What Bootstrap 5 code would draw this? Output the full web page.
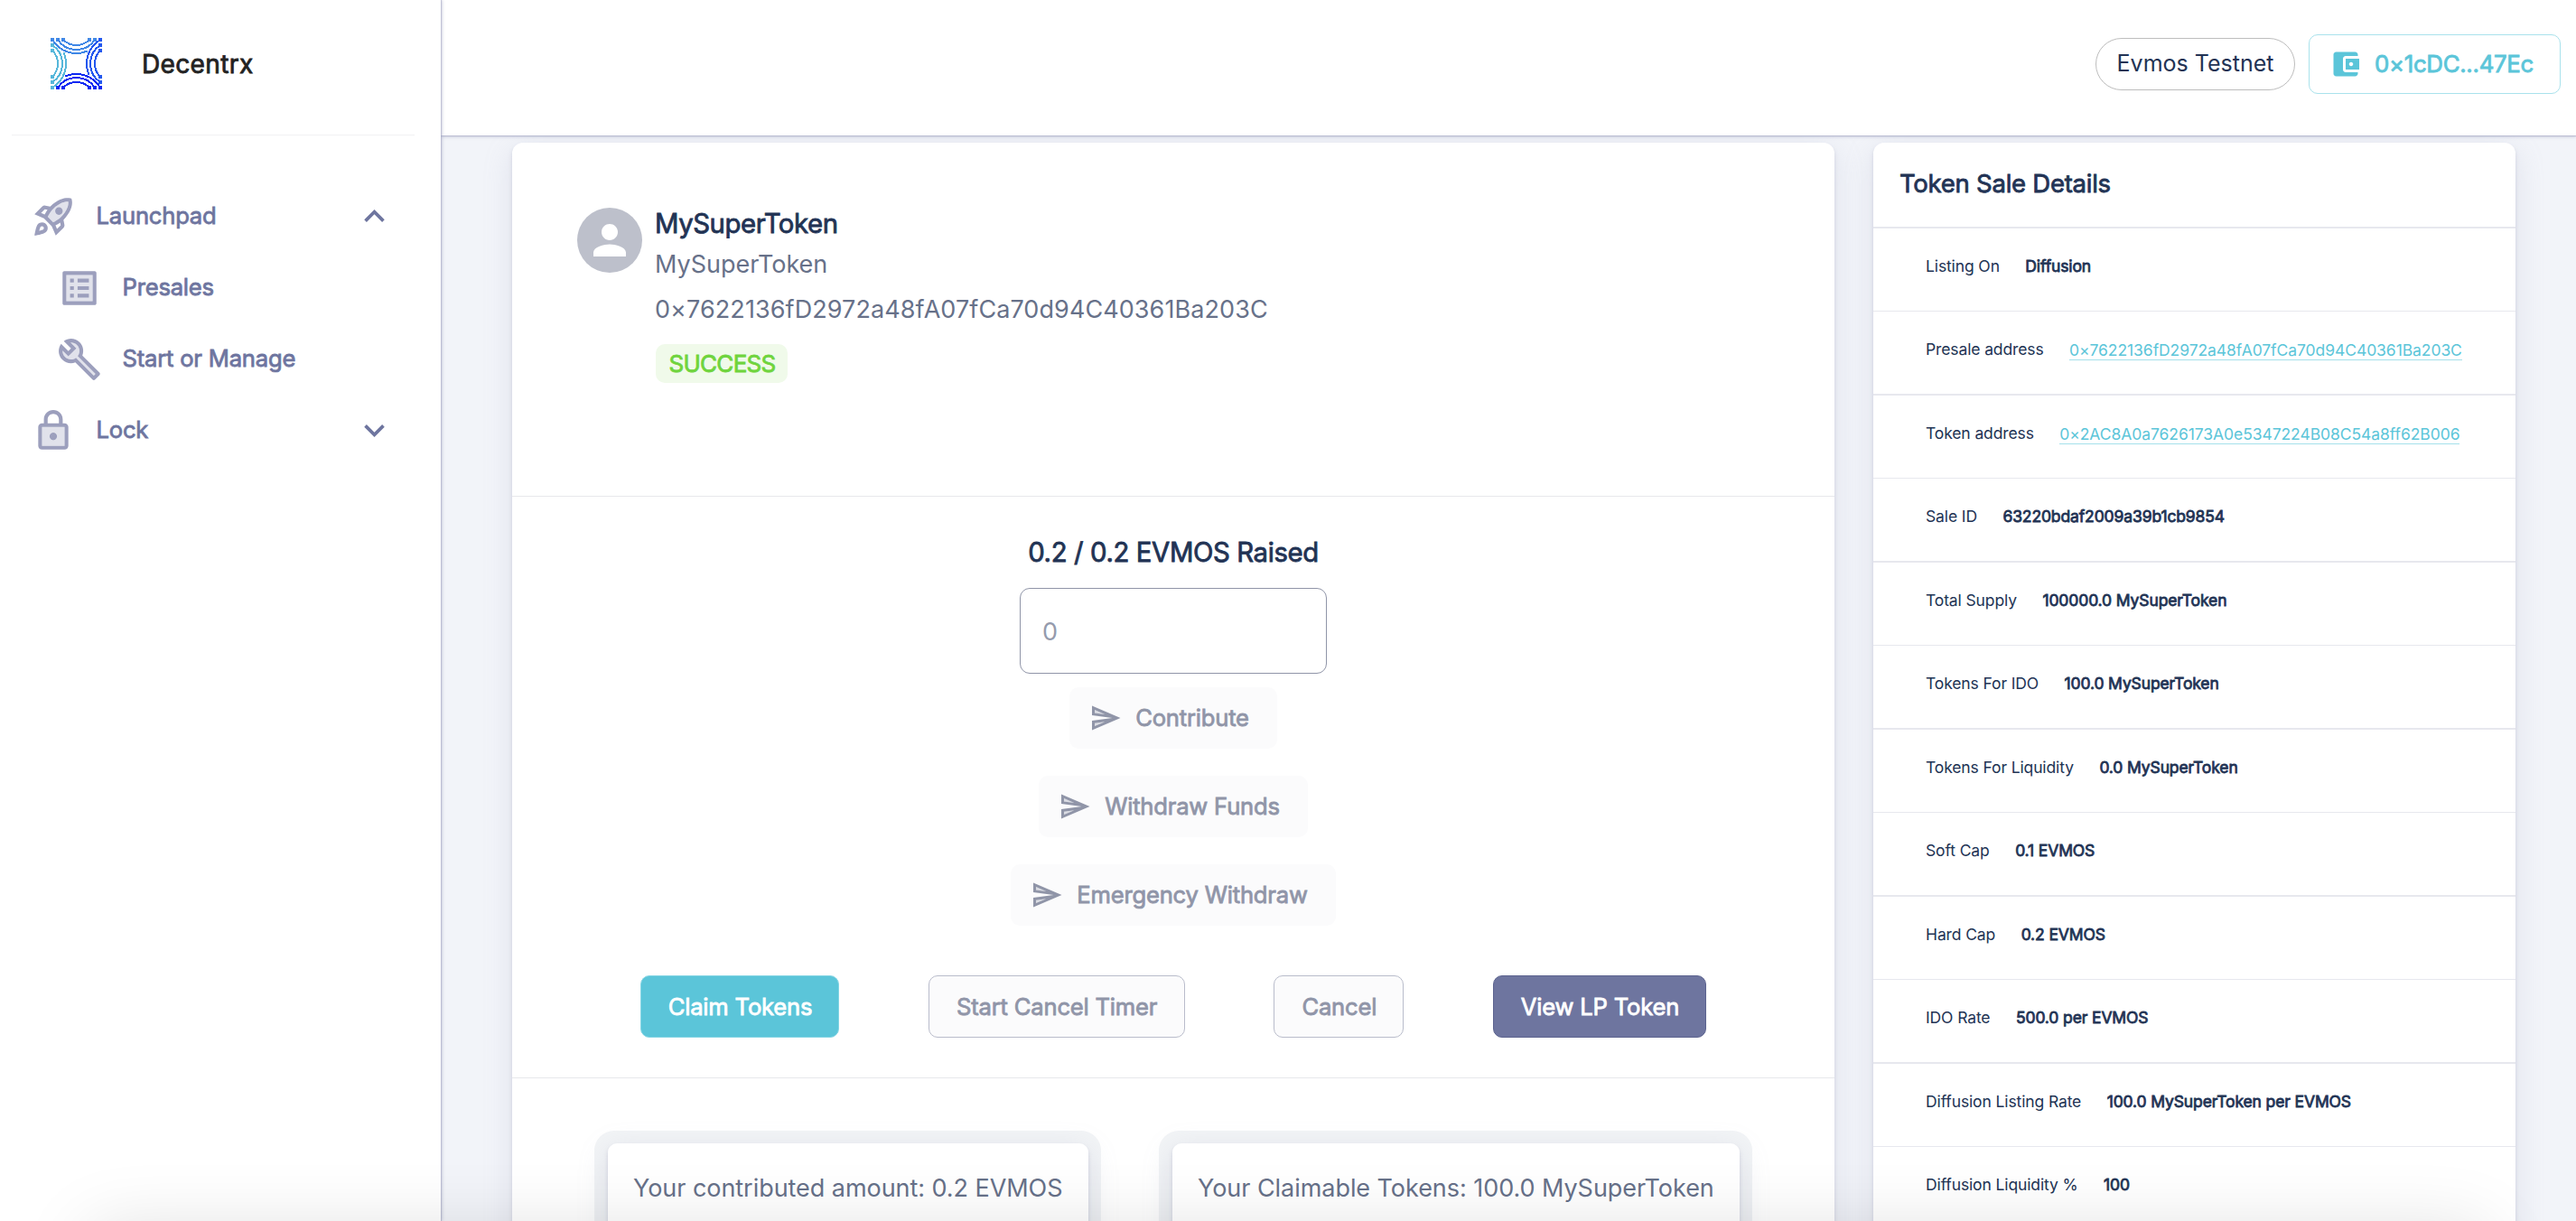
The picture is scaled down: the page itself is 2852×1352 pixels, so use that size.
<!DOCTYPE html>
<html lang="en">
<head>
<meta charset="utf-8">
<title>Decentrx</title>
<link href="https://cdn.jsdelivr.net/npm/bootstrap@5.3.0/dist/css/bootstrap.min.css" rel="stylesheet">
<style>
body{font-family:Inter,"Noto Sans",sans-serif;font-size:27px;color:#223354;background:#f2f4f9;height:1352px;overflow:hidden}
.faux{-webkit-text-stroke:.8px currentColor}
.side{width:488px;height:1352px;z-index:3;box-shadow:2px 0 3px rgba(159,162,191,.36),1px 0 1px rgba(159,162,191,.5)}
.brand-row{height:150px;margin:0 29px 0 13px;border-bottom:1px solid #f1f1f3;padding:8px 0 0 43px}
.brand-name{margin-left:44px;font-size:28px;line-height:1;color:#222;letter-spacing:.35px}
.menu-list{padding-top:50px;color:#6e759f;font-size:25.6px;letter-spacing:-.2px}
.menu-list .item{height:79px;padding:0 51px 0 34px}
.menu-list .sub{padding-left:63px}
.menu-list svg.mi{width:50px;height:50px;fill:#9c9fbd;margin-right:22.5px}
.menu-list svg.chev{width:45px;height:45px;fill:#6e759f}
.topbar{height:150px;padding:0 17px 8px 0;z-index:2;box-shadow:0 2px 3px rgba(159,162,191,.36),0 1px 1px rgba(159,162,191,.5)}
.net{height:58px;width:221px;border:1px solid #bdbdbd;border-radius:29px;font-size:25px}
.wallet{height:66px;width:279px;border:1px solid #a9e2ec;border-radius:10px;color:#5bc5d9;font-size:25.8px;letter-spacing:-.3px;margin-left:15px;padding:0 0 0 22px}
.wallet svg{width:36px;height:36px;fill:#5bc5d9;margin-right:14px}
.content{padding:8px 0 0 79px;gap:43px;align-items:flex-start;height:1202px;overflow:hidden}
.panel{background:#fff;border-radius:12px;height:1300px;box-shadow:0 9px 32px rgba(159,162,191,.22),0 3px 4px rgba(159,162,191,.36)}
.main-panel{width:1464px}
.sale-panel{width:711px}
.sec{border-bottom:1px solid #e7e8eb}
.sec-head{height:392px;padding:68px 72px 0}
.ava{width:72px;height:72px;background:#bdc0cb;margin:4px 14px 0 0}
.ava svg{width:54px;height:54px;fill:#fff}
.t-title{font-size:29.3px;line-height:43px;letter-spacing:-.42px}
.t-sub{line-height:48px;color:#677189}
.t-addr{line-height:52px;color:#677189;letter-spacing:.08px}
.status{margin:12px 0 0 1px;height:43px;width:146px;border-radius:10px;background:#f0faea;color:#6fd43d;font-size:26px;letter-spacing:-.7px;padding-left:1px}
.sec-act{height:644px;padding-top:42px}
.raised{font-size:29.3px;line-height:40px;letter-spacing:-.38px}
.amount{width:340px;height:95px;margin-top:19px;border:1px solid #9095a8;border-radius:11px;padding:1px 24px 0;font-size:27px;color:#9095a8}
.amount::placeholder{color:#959bad;opacity:1}
.soft{height:68px;border-radius:10px;background:#fbfbfc;color:#9095a8;font-size:25.6px;letter-spacing:-.2px;padding:0 31px 0 22px;margin-top:15px}
.soft+.soft{margin-top:30px}
.soft+.soft~.soft{margin-top:30px}
.soft svg{width:36px;height:36px;fill:#9095a8;margin-right:15px}
.acts{width:1180px;margin-top:55px}
.act{height:69px;border-radius:10px;font-size:25.6px;letter-spacing:-.2px;padding:2px 0 0 1px;border:1px solid #b9bccb;background:#fbfbfc;color:#9095a8}
.act.teal{background:#5bc5d9;border-color:#84d5e4;color:#fff;width:220px}
.act.slate{background:#6e759f;border-color:#5c638f;color:#fff;width:236px}
.w-timer{width:284px}.w-cancel{width:144px}
.sec-sum{padding:58px 0 0 91px;gap:64px}
.tray{background:#f2f4f6;border-radius:22px;padding:14px 14px 14px 15px;height:170px}
.tray-in{background:#fff;border-radius:10px;height:150px;padding:30px 28px;line-height:40px;color:#677189;letter-spacing:-.05px;white-space:nowrap;box-shadow:0 9px 32px rgba(159,162,191,.25),0 3px 4px rgba(159,162,191,.4)}
.tray.a{width:561px}.tray.b{width:657px}
.sale-title{height:95px;border-bottom:2px solid #e7e8ee;padding:0 29px 2px;font-size:27.5px;letter-spacing:-.25px}
.fact{height:92px;border-bottom:1px solid #e7e8ee;padding:0 0 6px 58px;font-size:17.5px;letter-spacing:-.12px;gap:28.5px;white-space:nowrap}
.fact:nth-child(odd){height:93px;border-bottom-width:2px}
.fact a{color:#5bc5d9;text-decoration:none;border-bottom:1px solid #a5e0ea;line-height:20px;margin-top:1px;letter-spacing:-.07px}
.fact b{font-weight:400;-webkit-text-stroke:.8px currentColor}
.fade-foot{position:fixed;left:110px;right:110px;top:1372px;height:60px;box-shadow:0 0 80px 10px rgba(0,0,0,.13);z-index:5}
</style>
<script src="https://cdn.jsdelivr.net/npm/bootstrap@5.3.0/dist/js/bootstrap.bundle.min.js"></script>
</head>
<body>
<svg class="d-none">
<symbol id="send" viewBox="0 0 24 24"><path opacity=".3" d="M4 8.25l7.51 1-7.5-3.22zm.01 9.72l7.5-3.22-7.51 1z"/><path d="M2.01 3L2 10l15 2-15 2 .01 7L23 12 2.01 3zM4 8.25V6.03l7.51 3.22-7.51-1zm.01 9.72v-2.22l7.51-1-7.51 3.22z"/></symbol>
<g id="arcs" fill="none" stroke-width="2"><path d="M2 2A30.9 30.9 0 0 0 41 14.4M8 2A24.6 24.6 0 0 0 49 2M14 2A20.5 20.5 0 0 0 43 2"/><path stroke-width="3.6" d="M0 1.8h3.6M6.2 1.8h3.6M12.2 1.8h3.6M41.2 1.8h3.6M47.2 1.8h3.6"/></g>
</svg>
<div class="d-flex">
<aside class="side bg-white flex-shrink-0 position-relative">
<div class="brand-row d-flex align-items-center pb-3">
<svg width="57" height="57" viewBox="0 0 57 57" shape-rendering="crispEdges"><use href="#arcs" stroke="#3f87e6"/><use href="#arcs" stroke="#2257ee" transform="rotate(90 28.5 28.5)"/><use href="#arcs" stroke="#0c27f2" transform="rotate(180 28.5 28.5)"/><use href="#arcs" stroke="#56b7da" transform="rotate(270 28.5 28.5)"/></svg>
<span class="brand-name faux">Decentrx</span>
</div>
<nav class="menu-list faux">
<div class="item d-flex align-items-center"><svg class="mi" viewBox="0 0 24 24"><path opacity=".3" d="M16 12.24c-1.32 1.32-3.38 2.4-4.04 2.73l-2.93-2.93c.32-.65 1.4-2.71 2.73-4.04 4.68-4.68 8.23-3.99 8.23-3.99s.69 3.55-3.99 8.23z"/><path d="M6 15c-.83 0-1.58.34-2.12.88C2.7 17.06 2 22 2 22s4.94-.7 6.12-1.88A2.996 2.996 0 0 0 6 15zm.71 3.71c-.28.28-2.17.76-2.17.76s.47-1.88.76-2.17c.17-.19.42-.3.7-.3.55 0 1 .45 1 1 0 .28-.11.53-.29.71zm10.71-5.06c6.36-6.36 4.24-11.31 4.24-11.31S16.71.22 10.35 6.58l-2.49-.5a2.03 2.03 0 0 0-1.81.55L2 10.69l5 2.14L11.17 17l2.14 5 4.05-4.05c.47-.47.68-1.15.55-1.81l-.49-2.49zM7.41 10.83l-1.91-.82 1.97-1.97 1.44.29c-.57.83-1.08 1.7-1.5 2.5zm6.58 7.67-.82-1.91c.8-.42 1.67-.93 2.49-1.5l.29 1.44-1.96 1.97zM16 12.24c-1.32 1.32-3.38 2.4-4.04 2.73l-2.93-2.93c.32-.65 1.4-2.71 2.73-4.04 4.68-4.68 8.23-3.99 8.23-3.99s.69 3.55-3.99 8.23zM15 11c1.1 0 2-.9 2-2s-.9-2-2-2-2 .9-2 2 .9 2 2 2z"/></svg><span>Launchpad</span><svg class="chev ms-auto" viewBox="0 0 24 24"><path d="m12 8-6 6 1.41 1.41L12 10.83l4.59 4.58L18 14z"/></svg></div>
<div class="item sub d-flex align-items-center"><svg class="mi" viewBox="0 0 24 24"><path opacity=".3" d="M19 5H5v14h14V5z"/><path d="M11 7h6v2h-6zm0 4h6v2h-6zm0 4h6v2h-6zM7 7h2v2H7zm0 4h2v2H7zm0 4h2v2H7zM20.1 3H3.9c-.5 0-.9.4-.9.9v16.2c0 .4.4.9.9.9h16.2c.4 0 .9-.5.9-.9V3.9c0-.5-.5-.9-.9-.9zM19 19H5V5h14v14z"/></svg><span>Presales</span></div>
<div class="item sub d-flex align-items-center"><svg class="mi" viewBox="0 0 24 24"><path opacity=".3" d="M19.61 20.59l-9.46-9.46c-.61.45-1.29.72-2 .82-1.36.2-2.79-.21-3.83-1.25C3.37 9.76 2.93 8.5 3 7.26l3.09 3.09 4.24-4.24-3.09-3.09c1.24-.07 2.49.37 3.44 1.31 1.08 1.08 1.49 2.57 1.24 3.96-.12.71-.42 1.37-.88 1.96l9.45 9.45-.88.89z"/><path d="M22.61 18.99l-9.08-9.08c.93-2.34.45-5.1-1.44-7C9.79.61 6.21.4 3.66 2.26L7.5 6.11 6.08 7.52 2.25 3.69C.39 6.23.6 9.82 2.9 12.11c1.86 1.86 4.57 2.35 6.89 1.48l9.11 9.11c.39.39 1.02.39 1.41 0l2.3-2.3c.4-.38.4-1.01 0-1.41zm-3 1.6l-9.46-9.46c-.61.45-1.29.72-2 .82-1.36.2-2.79-.21-3.83-1.25C3.37 9.76 2.93 8.5 3 7.26l3.09 3.09 4.24-4.24-3.09-3.09c1.24-.07 2.49.37 3.44 1.31 1.08 1.08 1.49 2.57 1.24 3.96-.12.71-.42 1.37-.88 1.96l9.45 9.45-.88.89z"/></svg><span>Start or Manage</span></div>
<div class="item d-flex align-items-center"><svg class="mi" viewBox="0 0 24 24"><path opacity=".3" d="M6 20h12V10H6v10zm6-7c1.1 0 2 .9 2 2s-.9 2-2 2-2-.9-2-2 .9-2 2-2z"/><path d="M18 8h-1V6c0-2.76-2.24-5-5-5S7 3.24 7 6v2H6c-1.1 0-2 .9-2 2v10c0 1.1.9 2 2 2h12c1.1 0 2-.9 2-2V10c0-1.1-.9-2-2-2zM9 6c0-1.66 1.34-3 3-3s3 1.34 3 3v2H9V6zm9 14H6V10h12v10zm-6-3c1.1 0 2-.9 2-2s-.9-2-2-2-2 .9-2 2 .9 2 2 2z"/></svg><span>Lock</span><svg class="chev ms-auto" viewBox="0 0 24 24"><path d="M16.59 8.59 12 13.17 7.41 8.59 6 10l6 6 6-6z"/></svg></div>
</nav>
</aside>
<div class="flex-grow-1">
<header class="topbar bg-white position-relative d-flex align-items-center justify-content-end">
<div class="net d-flex align-items-center justify-content-center"><span>Evmos Testnet</span></div>
<div class="wallet d-flex align-items-center"><svg viewBox="0 0 24 24"><path d="M21 18v1c0 1.1-.9 2-2 2H5c-1.11 0-2-.9-2-2V5c0-1.1.89-2 2-2h14c1.1 0 2 .9 2 2v1h-9c-1.11 0-2 .9-2 2v8c0 1.1.89 2 2 2h9zm-9-2h10V8H12v8zm4-2.5c-.83 0-1.5-.67-1.5-1.5s.67-1.5 1.5-1.5 1.5.67 1.5 1.5-.67 1.5-1.5 1.5z"/></svg><span class="faux">0×1cDC...47Ec</span></div>
</header>
<main class="content d-flex">
<section class="panel main-panel">
<div class="sec sec-head d-flex">
<div class="ava rounded-circle d-flex align-items-center justify-content-center"><svg viewBox="0 0 24 24"><path d="M12 12c2.21 0 4-1.79 4-4s-1.79-4-4-4-4 1.79-4 4 1.79 4 4 4zm0 2c-2.67 0-8 1.34-8 4v2h16v-2c0-2.66-5.33-4-8-4z"/></svg></div>
<div>
<div class="t-title faux"><span>MySuperToken</span></div>
<div class="t-sub"><span>MySuperToken</span></div>
<div class="t-addr"><span>0×7622136fD2972a48fA07fCa70d94C40361Ba203C</span></div>
<div class="status faux d-flex align-items-center justify-content-center"><span>SUCCESS</span></div>
</div>
</div>
<div class="sec sec-act d-flex flex-column align-items-center">
<div class="raised faux"><span>0.2 / 0.2 EVMOS Raised</span></div>
<input class="amount" placeholder="0">
<div class="soft faux d-flex align-items-center"><svg><use href="#send"/></svg><span>Contribute</span></div>
<div class="soft faux d-flex align-items-center"><svg><use href="#send"/></svg><span>Withdraw Funds</span></div>
<div class="soft faux d-flex align-items-center"><svg><use href="#send"/></svg><span>Emergency Withdraw</span></div>
<div class="acts faux d-flex justify-content-between">
<div class="act teal d-flex align-items-center justify-content-center"><span>Claim Tokens</span></div>
<div class="act w-timer d-flex align-items-center justify-content-center"><span>Start Cancel Timer</span></div>
<div class="act w-cancel d-flex align-items-center justify-content-center"><span>Cancel</span></div>
<div class="act slate d-flex align-items-center justify-content-center"><span>View LP Token</span></div>
</div>
</div>
<div class="sec-sum d-flex">
<div class="tray a"><div class="tray-in"><span>Your contributed amount: 0.2 EVMOS</span></div></div>
<div class="tray b"><div class="tray-in"><span>Your Claimable Tokens: 100.0 MySuperToken</span></div></div>
</div>
</section>
<section class="panel sale-panel">
<div class="sale-title faux d-flex align-items-center"><span>Token Sale Details</span></div>
<div class="fact d-flex align-items-center"><span>Listing On</span><b>Diffusion</b></div>
<div class="fact d-flex align-items-center"><span>Presale address</span><a href="#">0×7622136fD2972a48fA07fCa70d94C40361Ba203C</a></div>
<div class="fact d-flex align-items-center"><span>Token address</span><a href="#">0×2AC8A0a7626173A0e5347224B08C54a8ff62B006</a></div>
<div class="fact d-flex align-items-center"><span>Sale ID</span><b>63220bdaf2009a39b1cb9854</b></div>
<div class="fact d-flex align-items-center"><span>Total Supply</span><b>100000.0 MySuperToken</b></div>
<div class="fact d-flex align-items-center"><span>Tokens For IDO</span><b>100.0 MySuperToken</b></div>
<div class="fact d-flex align-items-center"><span>Tokens For Liquidity</span><b>0.0 MySuperToken</b></div>
<div class="fact d-flex align-items-center"><span>Soft Cap</span><b>0.1 EVMOS</b></div>
<div class="fact d-flex align-items-center"><span>Hard Cap</span><b>0.2 EVMOS</b></div>
<div class="fact d-flex align-items-center"><span>IDO Rate</span><b>500.0 per EVMOS</b></div>
<div class="fact d-flex align-items-center"><span>Diffusion Listing Rate</span><b>100.0 MySuperToken per EVMOS</b></div>
<div class="fact d-flex align-items-center"><span>Diffusion Liquidity %</span><b>100</b></div>
</section>
</main>
</div>
</div>
<div class="fade-foot"></div>
</body>
</html>
